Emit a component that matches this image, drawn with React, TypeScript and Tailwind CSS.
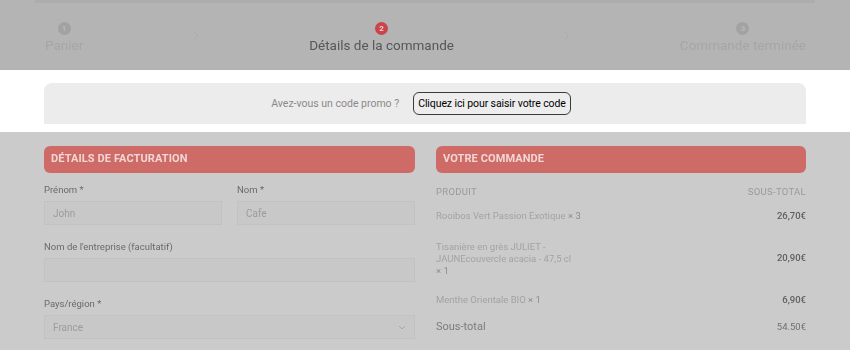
import React from 'react';

const font = { fontFamily: 'Roboto, "Liberation Sans", sans-serif' };

function Step({ n, label, active }: { n: number; label: string; active?: boolean }) {
  return (
    <div className="flex flex-col items-center gap-[1px]">
      <div
        className={
          active
            ? 'w-[13px] h-[13px] rounded-full bg-[#c9454a] text-[#ecd0d0] text-[8px] font-bold flex items-center justify-center'
            : 'w-[13px] h-[13px] rounded-full bg-[#a2a2a2] text-[#b8b8b8] text-[8px] font-bold flex items-center justify-center'
        }
      >
        {n}
      </div>
      <span className={active ? 'text-[13.5px] text-[#575757] leading-[18px]' : 'text-[13.5px] text-[#a6a6a6] leading-[18px]'}>
        {label}
      </span>
    </div>
  );
}

function Chevron() {
  return (
    <svg width="6" height="9" viewBox="0 0 6 9" className="mb-[6px]">
      <path d="M1 1l3.5 3.5L1 8" fill="none" stroke="#a9a9a9" strokeWidth="1" />
    </svg>
  );
}

function Field({ label, value, chevron }: { label: string; value?: string; chevron?: boolean }) {
  return (
    <div className="flex flex-col gap-[5px]">
      <span className="text-[9.5px] text-[#6a6a6a] leading-[12px]">{label}</span>
      <div className="h-[24px] bg-[#c8c8c8] border border-[#c2c2c2] flex items-center justify-between px-[8px]">
        <span className="text-[10px] text-[#9c9c9c]">{value}</span>
        {chevron && (
          <svg width="8" height="5" viewBox="0 0 8 5">
            <path d="M1 1l3 3 3-3" fill="none" stroke="#a6a6a6" strokeWidth="1" />
          </svg>
        )}
      </div>
    </div>
  );
}

function Header({ title }: { title: string }) {
  return (
    <div className="h-[27px] rounded-[6px] bg-[#cf6b67] flex items-center px-[7px]">
      <span className="text-[11px] font-bold text-[#f0d6d4] uppercase tracking-[0.1px]">{title}</span>
    </div>
  );
}

export default function App() {
  return (
    <div className="w-[850px] h-[350px] overflow-hidden bg-[#cbcbcb]" style={font}>
      {/* steps, under overlay */}
      <div className="h-[70px] bg-[#b4b4b4]">
        <div className="mx-[35px] h-[3px] bg-[#adadad]" />
        <div className="flex items-center justify-between pl-[45px] pr-[44px] pt-[19px] blur-[0.4px]">
          <Step n={1} label="Panier" />
          <Chevron />
          <Step n={2} label="Détails de la commande" active />
          <Chevron />
          <Step n={3} label="Commande terminée" />
        </div>
      </div>

      {/* promo band, highlighted */}
      <div className="h-[62px] bg-white pt-[13px] px-[44px]">
        <div className="h-[41px] bg-[#ececec] rounded-t-[8px] flex items-center justify-center gap-[14px] pr-[8px]">
          <span className="text-[10.5px] text-[#8a8a8a]">Avez-vous un code promo ?</span>
          <button className="h-[23px] px-[4px] border border-[#3a3a3a] rounded-[6px] text-[10.5px] text-black bg-[#ededed] tracking-[-0.1px]">
            Cliquez ici pour saisir votre code
          </button>
        </div>
      </div>

      {/* checkout, under overlay */}
      <div className="flex gap-[21px] px-[44px] pt-[14px] blur-[0.3px]">
        <div className="w-[371px] flex flex-col">
          <Header title="Détails de facturation" />
          <div className="grid grid-cols-2 gap-x-[15px] mt-[11px]">
            <Field label="Prénom *" value="John" />
            <Field label="Nom *" value="Cafe" />
          </div>
          <div className="mt-[16px]">
            <Field label="Nom de l'entreprise (facultatif)" />
          </div>
          <div className="mt-[16px]">
            <Field label="Pays/région *" value="France" chevron />
          </div>
        </div>

        <div className="w-[370px] flex flex-col">
          <Header title="Votre commande" />
          <div className="flex justify-between mt-[12px] text-[9.5px] text-[#9a9a9a] uppercase tracking-[0.3px]">
            <span>Produit</span>
            <span>Sous-total</span>
          </div>
          <div className="flex justify-between items-center mt-[10px] text-[9.5px]">
            <span className="text-[#a3a3a3]">
              Rooibos Vert Passion Exotique <span className="text-[#8c8c8c]">× 3</span>
            </span>
            <span className="text-[#5f5f5f] font-medium">26,70€</span>
          </div>
          <div className="flex justify-between items-center mt-[17px] text-[9.5px]">
            <div className="text-[#a3a3a3] leading-[12px] flex flex-col">
              <span>Tisanière en grès JULIET -</span>
              <span>JAUNEcouvercle acacia - 47,5 cl</span>
              <span className="text-[#8c8c8c]">× 1</span>
            </div>
            <span className="text-[#5f5f5f] font-medium">20,90€</span>
          </div>
          <div className="flex justify-between items-center mt-[16px] text-[9.5px]">
            <span className="text-[#a3a3a3]">
              Menthe Orientale BIO <span className="text-[#8c8c8c]">× 1</span>
            </span>
            <span className="text-[#5f5f5f] font-medium">6,90€</span>
          </div>
          <div className="flex justify-between items-center mt-[12px]">
            <span className="text-[11px] text-[#7c7c7c]">Sous-total</span>
            <span className="text-[9.5px] text-[#707070]">54.50€</span>
          </div>
        </div>
      </div>
    </div>
  );
}
